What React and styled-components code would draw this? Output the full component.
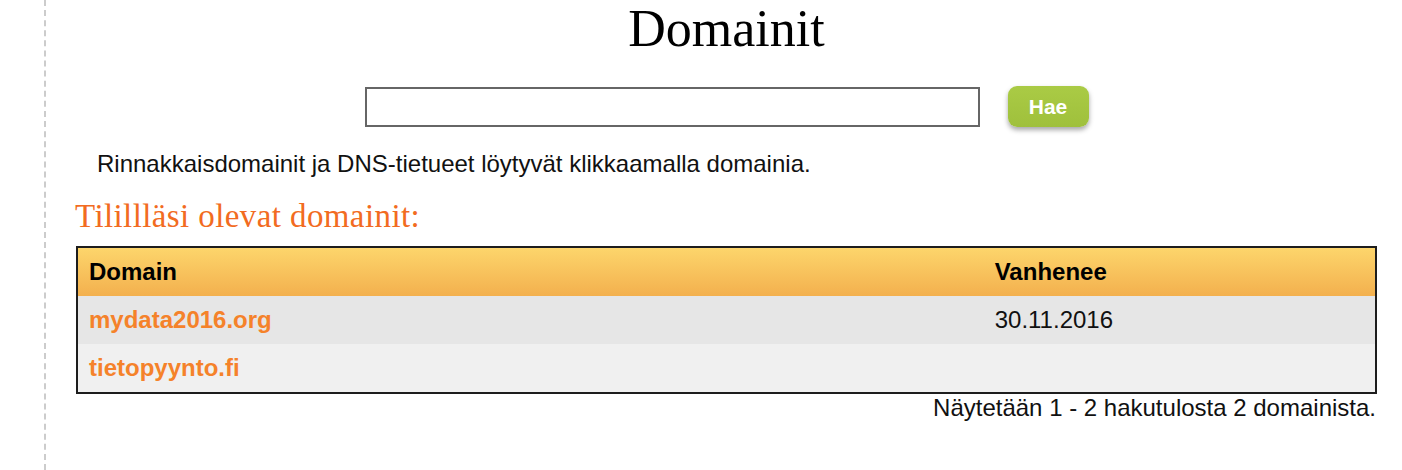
import styled, { createGlobalStyle } from "styled-components";

const GlobalStyle = createGlobalStyle`
  html, body {
    margin: 0;
    padding: 0;
    background: #fff;
  }
  body {
    font-family: "Liberation Sans", Arial, sans-serif;
    color: #111;
  }
`;

const Page = styled.div`
  display: flex;
  min-height: 470px;
`;

const Sidebar = styled.div`
  width: 44px;
  flex: none;
  border-right: 2px dashed #cccccc;
`;

const Main = styled.main`
  flex: 1;
  padding: 0 25px 0 30px;
`;

const Title = styled.h1`
  margin: 0;
  font-family: "Liberation Serif", "Times New Roman", serif;
  font-weight: normal;
  font-size: 52px;
  line-height: 58px;
  text-align: center;
  color: #000;
`;

const SearchForm = styled.form`
  display: flex;
  justify-content: center;
  align-items: flex-start;
  gap: 28px;
  margin-top: 29px;
`;

const SearchInput = styled.input`
  width: 615px;
  height: 40px;
  box-sizing: border-box;
  border: 2px solid #666666;
  background: #fff;
  padding: 0 8px;
  font-size: 20px;
  font-family: inherit;
  outline: none;
`;

const SearchButton = styled.button`
  width: 81px;
  height: 41px;
  margin-top: -1px;
  border: none;
  border-radius: 9px;
  background: linear-gradient(#aacb45, #9fc03c);
  color: #fff;
  font-family: "Liberation Sans", Arial, sans-serif;
  font-weight: bold;
  font-size: 21px;
  box-shadow: 0 3px 5px rgba(0, 0, 0, 0.35);
  cursor: pointer;
`;

const Hint = styled.p`
  margin: 23px 0 0 21px;
  font-size: 24px;
  line-height: 28px;
`;

const SectionTitle = styled.h2`
  margin: 18px 0 0 -1px;
  font-family: "Liberation Serif", "Times New Roman", serif;
  font-weight: normal;
  font-size: 33px;
  line-height: 40px;
  letter-spacing: 0.4px;
  color: #f26b21;
`;

const Table = styled.table`
  width: 100%;
  margin-top: 10px;
  border-collapse: collapse;
  border: 2px solid #1d1d1d;
`;

const HeadRow = styled.tr`
  background: linear-gradient(#fdd66c, #f3b04e);
`;

const Row = styled.tr`
  background: ${(p) => (p.$alt ? "#f0f0f0" : "#e6e6e6")};
`;

const Th = styled.th`
  height: 48px;
  padding: 0 11px;
  text-align: left;
  font-size: 24px;
  font-weight: bold;
  color: #000;
  width: ${(p) => p.$width || "auto"};
`;

const Td = styled.td`
  height: 48px;
  padding: 0 11px;
  font-size: 24px;
  color: #111;
`;

const DomainLink = styled.a`
  color: #f5822a;
  font-weight: bold;
  text-decoration: none;
`;

const Summary = styled.p`
  margin: 0 1px 0 0;
  text-align: right;
  font-size: 24px;
  line-height: 28px;
`;

const domains = [
  { name: "mydata2016.org", expires: "30.11.2016" },
  { name: "tietopyynto.fi", expires: "" },
];

export default function App() {
  return (
    <>
      <GlobalStyle />
      <Page>
        <Sidebar />
        <Main>
          <Title>Domainit</Title>
          <SearchForm onSubmit={(e) => e.preventDefault()}>
            <SearchInput type="text" />
            <SearchButton type="submit">Hae</SearchButton>
          </SearchForm>
          <Hint>
            Rinnakkaisdomainit ja DNS-tietueet löytyvät klikkaamalla domainia.
          </Hint>
          <SectionTitle>Tilillläsi olevat domainit:</SectionTitle>
          <Table>
            <thead>
              <HeadRow>
                <Th $width="69.8%">Domain</Th>
                <Th>Vanhenee</Th>
              </HeadRow>
            </thead>
            <tbody>
              {domains.map((d, i) => (
                <Row key={d.name} $alt={i % 2 === 1}>
                  <Td>
                    <DomainLink href="#">{d.name}</DomainLink>
                  </Td>
                  <Td>{d.expires}</Td>
                </Row>
              ))}
            </tbody>
          </Table>
          <Summary>Näytetään 1 - 2 hakutulosta 2 domainista.</Summary>
        </Main>
      </Page>
    </>
  );
}
